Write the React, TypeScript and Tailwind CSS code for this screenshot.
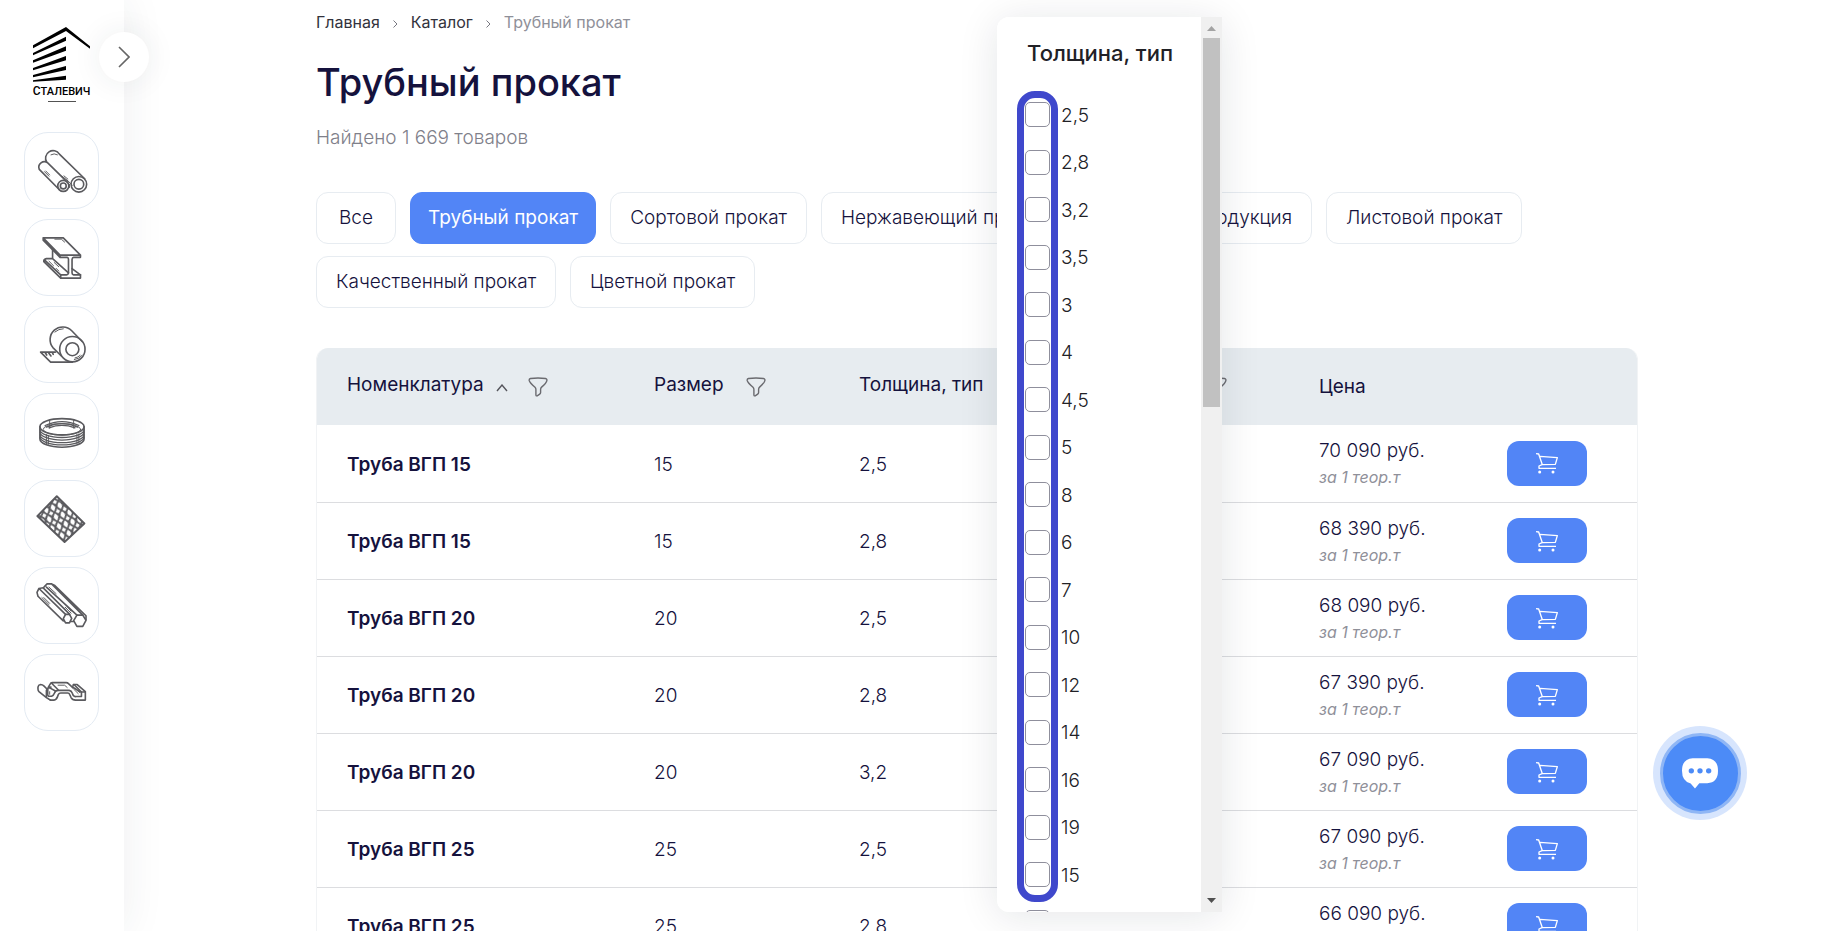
import React from "react";

const categories = [
  "Все",
  "Трубный прокат",
  "Сортовой прокат",
  "Нержавеющий прокат",
  "Метизная продукция",
  "Листовой прокат",
  "Качественный прокат",
  "Цветной прокат",
];

const rows = [
  ["Труба ВГП 15", "15", "2,5", "70 090 руб."],
  ["Труба ВГП 15", "15", "2,8", "68 390 руб."],
  ["Труба ВГП 20", "20", "2,5", "68 090 руб."],
  ["Труба ВГП 20", "20", "2,8", "67 390 руб."],
  ["Труба ВГП 20", "20", "3,2", "67 090 руб."],
  ["Труба ВГП 25", "25", "2,5", "67 090 руб."],
  ["Труба ВГП 25", "25", "2,8", "66 090 руб."],
];

const sizes = ["2,5", "2,8", "3,2", "3,5", "3", "4", "4,5", "5", "8", "6", "7", "10", "12", "14", "16", "19", "15", "20"];

function TileIcon({ children }: { children: React.ReactNode }) {
  return (
    <svg viewBox="0 0 225 229" className="h-full w-full" fill="none" stroke="#5a5a5e" strokeWidth="5" strokeLinejoin="round" strokeLinecap="round" aria-hidden="true">
      {children}
    </svg>
  );
}

const products = [
  {
    name: "Трубный прокат",
    icon: (
      <TileIcon>
        <circle cx="166" cy="157" r="24" />
        <circle cx="166" cy="157" r="15" />
        <circle cx="118" cy="162" r="17" />
        <circle cx="118" cy="162" r="9" />
        <path d="M184 140 106 64A23 23 0 0 0 67 89" />
        <path d="M132 152 70 91A17 17 0 0 0 44 111L106 174" />
        <path d="M132 146l14 14M137 157v10M80 66q10-6 20 0M60 118l14 14M64 116l12 12M114 132l18 14M120 131l12 10" strokeWidth="3" />
      </TileIcon>
    ),
  },
  {
    name: "Балка",
    icon: (
      <TileIcon>
        <path d="M56 54H118L171 107H108ZM56 54V61L108 114H130Q134 115 134 120V162Q133 168 128 168H110V178H171V168H150Q145 167 145 162V120Q146 115 150 114H171V107M108 107V114" />
        <path d="M85 90V118L134 162M85 118H66Q57 120 58 127L110 178M60 122 110 168M145 149 171 168" />
        <path d="M92 58h20l10 9M90 130l14 13M74 126l14 14M96 148l8 8" strokeWidth="3" />
      </TileIcon>
    ),
  },
  {
    name: "Рулон",
    icon: (
      <TileIcon>
        <circle cx="146" cy="129" r="39" />
        <circle cx="146" cy="129" r="20" />
        <path d="M177 106 144 72A39 39 0 0 0 86 124L112 150" />
        <path d="M94 138H48L79 169H146M62 139l5 8M72 139l8 11M84 139l3 6" />
        <path d="M92 76q12-10 26-10M152 161q16-2 24-13M154 156q10-2 16-8" strokeWidth="3" />
      </TileIcon>
    ),
  },
  {
    name: "Проволока",
    icon: (
      <TileIcon>
        <ellipse cx="114" cy="100" rx="68" ry="25" />
        <ellipse cx="114" cy="108" rx="58" ry="18" strokeWidth="3" />
        <path d="M46 100V138A68 25 0 0 0 182 138V100" />
        <path d="M46 108A68 25 0 0 0 182 108M46 116A68 25 0 0 0 182 116M46 124A68 25 0 0 0 182 124M46 131A68 25 0 0 0 182 131M62 96Q114 72 166 96M66 101Q114 80 162 101M74 103Q114 88 154 103" strokeWidth="4" />
        <path d="M76 80v24M150 80v24M66 124v28M72 126v28M160 124v28M166 122v28" strokeWidth="3" />
      </TileIcon>
    ),
  },
  {
    name: "Сетка",
    icon: (
      <TileIcon>
        <defs>
          <pattern id="mesh" width="22" height="30" patternUnits="userSpaceOnUse" patternTransform="translate(98 46) rotate(-18)">
            <path d="M11 -2Q9 8 0 15 9 21 11 32 13 21 22 15 13 8 11 -2Z" strokeWidth="6" />
          </pattern>
        </defs>
        <path d="M98 46 183 130 122 187 38 107Z" fill="url(#mesh)" strokeWidth="6" />
      </TileIcon>
    ),
  },
  {
    name: "Прутки",
    icon: (
      <TileIcon>
        <path d="M160 144h18l10 16-10 19h-18l-10-18Z" />
        <path d="M125 142h12l7 12-7 14h-12l-7-13Z" />
        <path d="M188 158V146L92 53 82 48H68L59 57M178 144 82 48M160 144 66 58M118 162 40 86 37 74 43 62 56 60 138 142M125 142 43 62M150 164H140" />
        <path d="M74 58l22 20M52 90l22 22M58 90l18 18M124 120l18 18M130 118l12 14" strokeWidth="3" />
      </TileIcon>
    ),
  },
  {
    name: "Профиль",
    icon: (
      <TileIcon>
        <path d="M70 106V122Q71 127 76 126H82Q88 124 91 116 94 108 102 108H136Q143 109 146 117L149 124Q152 128 158 127H174V113L151 90" />
        <path d="M78 138H88Q96 138 100 128L103 120Q105 116 110 116H132Q136 116 138 121L142 130Q146 138 156 138H186V112L161 90H149L147 98 170 113H186" />
        <path d="M66 108Q70 98 80 98M66 108V130L78 138M66 130 43 112Q40 109 40 104V98Q41 91 48 90 54 90 58 94L70 106M78 88Q79 84 84 84H127Q131 84 134 87L148 100M78 88 72 98 94 110M82 86 102 106" />
        <path d="M102 92h20l8 7M150 104l14 14M154 100l14 14M76 112v8" strokeWidth="3" />
      </TileIcon>
    ),
  },
];

function Funnel() {
  return (
    <svg viewBox="0 0 20 20" className="h-5 w-5" fill="none" stroke="#6b6b70" strokeWidth="1.4" strokeLinejoin="round" aria-hidden="true">
      <path d="M2.5 1.5Q10 .6 17.500 1.500Q19.300 1.900 18.800 3.800Q18.300 6 13.600 10.100Q12.600 11 12.600 12.500V15.500Q12.600 16.500 11.700 17.100L9.200 18.800Q8 19.200 7.900 18V12.500Q7.900 11.200 7 10.200Q2 6 1.300 3.800Q.8 2 2.500 1.500Z" />
    </svg>
  );
}

function Cart() {
  return (
    <svg viewBox="0 0 66 64" className="h-[22px] w-[22px]" fill="none" stroke="#fff" strokeWidth="4" strokeLinejoin="round" aria-hidden="true">
      <path d="M0 4 8 5 19 37 58 36 64 16 12 12" />
      <path d="M18 37 9 41V48H60" />
      <circle cx="11" cy="59" r="4.500" fill="#fff" stroke="none" />
      <circle cx="51" cy="59" r="4.500" fill="#fff" stroke="none" />
    </svg>
  );
}

function Sidebar() {
  return (
    <aside className="relative z-10 flex w-[124px] shrink-0 flex-col bg-white shadow-[0_0_40px_rgba(40,50,60,0.08)]">
      <a href="#" className="ml-[33px] mt-[26px] flex w-[57px] flex-col items-center" aria-label="Сталевич">
        <svg viewBox="0 0 171 166" className="h-[56px] w-[57px]" aria-hidden="true">
          <path d="M0 57 99 2 171 60V67L99 14 0 66Z" />
          <path d="M0 80 99 31V43L0 87ZM0 102 99 60V73L0 109ZM0 125 99 89V102L0 132ZM0 146 99 119V131L0 153ZM0 162 99 148V160L0 166Z" />
        </svg>
        <span className="mt-[3px] font-['Roboto'] text-[11px] font-medium leading-[12px] text-black">
          <span className="text-[12px]">С</span>ТАЛЕВИЧ
        </span>
        <span className="mt-[3px] h-px w-7 bg-neutral-600" />
      </a>
      <button type="button" aria-label="Развернуть меню" className="absolute left-[99px] top-8 flex h-[50px] w-[50px] items-center justify-center rounded-full bg-white shadow-[0_0_30px_rgba(40,50,60,0.08)]">
        <svg viewBox="0 0 12 22" className="h-[22px] w-3" fill="none" stroke="#666" strokeWidth="1.600" aria-hidden="true">
          <path d="M1 1 11 11 1 21" />
        </svg>
      </button>
      <nav className="ml-6 mt-[30px] flex w-[75px] flex-col gap-[10px]">
        {products.map((p) => (
          <a key={p.name} href="#" aria-label={p.name} className="h-[77px] rounded-3xl border border-[#e4ebf3]">
            {p.icon}
          </a>
        ))}
      </nav>
    </aside>
  );
}

function FilterPopup() {
  return (
    <section aria-label="Толщина, тип" className="absolute bottom-[19px] left-[997px] top-[17px] z-20 w-[225px] rounded-xl shadow-[0_4px_40px_rgba(20,30,50,0.11)]">
      <div className="flex h-full overflow-hidden rounded-l-xl">
        <div className="flex-1 overflow-hidden bg-white pl-7 pt-5 text-[#212126]">
          <h2 className="pl-[2px] text-[22px] font-medium leading-8">Толщина, тип</h2>
          <div className="mt-[22px] grid h-[855px] auto-rows-fr">
            {sizes.map((s) => (
              <label key={s} className="flex items-center gap-[11px] text-[19px] font-light">
                <input type="checkbox" className="h-[25px] w-[25px] appearance-none rounded-[5px] border border-[#8f8f9c] bg-white" />
                <span className="pt-[2px]">{s}</span>
              </label>
            ))}
          </div>
        </div>
        <div className="flex w-[21px] flex-col items-center bg-[#f0f0f0]" aria-hidden="true">
          <svg viewBox="0 0 21 21" className="h-[21px] w-[21px]"><path d="M6 14 10.500 9 15 14Z" fill="#a3a3a3" /></svg>
          <div className="h-[369px] w-[17px] bg-[#c1c1c1]" />
          <svg viewBox="0 0 21 21" className="mt-auto h-[21px] w-[21px]"><path d="M6 7 10.500 12 15 7Z" fill="#505050" /></svg>
        </div>
      </div>
      <div className="pointer-events-none absolute bottom-[10px] left-5 top-[74px] w-[41px] rounded-[18px] border-[7px] border-[#3f48cc]" />
    </section>
  );
}

export default function App() {
  return (
    <div className="relative flex h-screen overflow-hidden bg-white font-['Inter','Noto_Sans',sans-serif] text-[#15123d]">
      <Sidebar />
      <main className="min-w-0 flex-1 pl-48 pr-[200px] pt-[10px]">
        <nav aria-label="Навигация" className="flex items-center text-[16px] leading-6 text-[#32323c]">
          <a href="#">Главная</a>
          <svg viewBox="0 0 5 8" className="mx-[13px] mt-1 h-2 w-[5px]" fill="none" stroke="#777780" aria-hidden="true"><path d="M.5.5 4 4 .5 7.500" /></svg>
          <a href="#">Каталог</a>
          <svg viewBox="0 0 5 8" className="mx-[13px] mt-1 h-2 w-[5px]" fill="none" stroke="#777780" aria-hidden="true"><path d="M.5.5 4 4 .5 7.500" /></svg>
          <span className="text-[#8f9099]">Трубный прокат</span>
        </nav>
        <h1 className="mt-6 text-[38px] font-medium leading-[48px]">Трубный прокат</h1>
        <p className="mt-5 text-[19px] font-light leading-6 text-[#7f808a]">Найдено 1 669 товаров</p>
        <div className="mt-[42px] flex flex-wrap gap-x-[14px] gap-y-3">
          {categories.map((c) => (
            <button
              key={c}
              type="button"
              className={
                c === "Трубный прокат"
                  ? "h-[52px] min-w-20 rounded-xl border border-[#5285f6] bg-[#5285f6] px-[17px] text-[19px] text-white"
                  : "h-[52px] min-w-20 rounded-xl border border-[#e7ecf1] bg-white px-[19px] text-[19px] font-light"
              }
            >
              {c}
            </button>
          ))}
        </div>
        <div className="mt-10 overflow-hidden rounded-t-xl border-x border-[#f1f3f5]">
          <table className="w-full table-fixed border-collapse text-left text-[19px] font-light">
            <colgroup>
              <col className="w-[307px]" />
              <col className="w-[205px]" />
              <col className="w-[270px]" />
              <col className="w-[190px]" />
              <col className="w-[188px]" />
              <col />
            </colgroup>
            <thead>
              <tr className="h-[77px] bg-[#e7ecf0]">
                <th scope="col" className="pb-[2px] pl-[30px] font-normal">
                  <div className="flex items-center">
                    Номенклатура
                    <svg viewBox="0 0 12 8" className="ml-3 mt-1 h-2 w-3" fill="none" stroke="#55555c" strokeWidth="1.400" aria-hidden="true"><path d="M1 7 6 1 11 7" /></svg>
                    <button type="button" aria-label="Фильтр: номенклатура" className="ml-5 mt-[2px]"><Funnel /></button>
                  </div>
                </th>
                <th scope="col" className="pb-[2px] pl-[30px] font-normal">
                  <div className="flex items-center gap-[22px]">
                    Размер
                    <button type="button" aria-label="Фильтр: размер" className="mt-[2px]"><Funnel /></button>
                  </div>
                </th>
                <th scope="col" className="pb-[2px] pl-[30px] font-normal">Толщина, тип</th>
                <th scope="col" className="pb-[2px] pl-[30px] font-normal">
                  <div className="flex items-center justify-between pr-[62px]">
                    Сталь
                    <button type="button" aria-label="Фильтр: сталь" className="mt-[2px]"><Funnel /></button>
                  </div>
                </th>
                <th scope="col" className="pl-[30px] pt-[2px] font-normal">Цена</th>
                <th scope="col" aria-label="Корзина" />
              </tr>
            </thead>
            <tbody>
              {rows.map(([name, size, type, price], i) => (
                <tr key={i} className="h-[77px] border-b border-[#dcdde0]">
                  <td className="pl-[30px] pt-[3px] font-semibold">{name}</td>
                  <td className="pl-[30px] pt-[3px]">{size}</td>
                  <td className="pl-[30px] pt-[3px]">{type}</td>
                  <td />
                  <td className="pl-[30px]">
                    <div className="leading-7">{price}</div>
                    <div className="text-[16px] font-normal italic leading-6 text-[#8f9099]">за 1 теор.т</div>
                  </td>
                  <td className="pl-[30px]">
                    <button type="button" aria-label="В корзину" className="flex h-[45px] w-20 items-center justify-center rounded-xl bg-[#5285f6]">
                      <Cart />
                    </button>
                  </td>
                </tr>
              ))}
            </tbody>
          </table>
        </div>
      </main>
      <FilterPopup />
      <button type="button" aria-label="Чат" className="absolute bottom-[111px] right-[91px] z-20 flex h-[94px] w-[94px] items-center justify-center rounded-full bg-[#d7e5fd]">
        <span className="flex h-[81px] w-[81px] items-center justify-center rounded-full border-[3px] border-[#8fb6f5] bg-[#4c8bf7]">
          <svg viewBox="0 0 108 92" className="h-[31px] w-9" aria-hidden="true">
            <path d="M32 0H76Q108 2 108 38 108 74 76 75H52L39 91 26 76Q0 70 0 38 0 2 32 0Z" fill="#fff" />
            <circle cx="28" cy="38" r="8" fill="#4c8bf7" />
            <circle cx="54" cy="38" r="8" fill="#4c8bf7" />
            <circle cx="80" cy="38" r="8" fill="#4c8bf7" />
          </svg>
        </span>
      </button>
    </div>
  );
}
